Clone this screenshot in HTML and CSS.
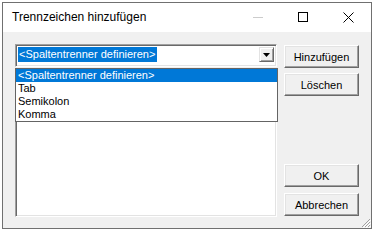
FILE: index.html
```html
<!DOCTYPE html>
<html>
<head>
<meta charset="utf-8">
<link rel="stylesheet" href="styles.css">
</head>
<body>
<div class="window">
  <div class="titlebar">
    <span class="title">Trennzeichen hinzufügen</span>
    <span class="tb-btn tb-min"><span class="min-line"></span></span>
    <span class="tb-btn tb-max"><span class="max-box"></span></span>
    <span class="tb-btn tb-close">
      <svg width="11" height="11" viewBox="0 0 11 11"><path d="M0.5 0.5 L10.5 10.5 M10.5 0.5 L0.5 10.5" stroke="#000" stroke-width="1"/></svg>
    </span>
  </div>
  <div class="content">
    <div class="left">
      <div class="combo">
        <span class="combo-text">&lt;Spaltentrenner definieren&gt;</span>
        <span class="combo-btn">
          <svg width="7" height="4" viewBox="0 0 7 4"><path d="M0 0 H7 L3.5 4 Z" fill="#000"/></svg>
        </span>
      </div>
      <div class="listbox">
        <ul class="popup">
          <li class="sel">&lt;Spaltentrenner definieren&gt;</li>
          <li>Tab</li>
          <li>Semikolon</li>
          <li>Komma</li>
        </ul>
      </div>
    </div>
    <div class="right">
      <button class="btn first">Hinzufügen</button>
      <button class="btn second">Löschen</button>
      <button class="btn ok">OK</button>
      <button class="btn cancel">Abbrechen</button>
    </div>
  </div>
  <svg class="grip" width="11" height="11" viewBox="0 0 11 11">
    <path d="M10 2 L2 10 M10 5 L5 10 M10 8 L8 10" stroke="#a0a0a0" stroke-width="1"/>
    <path d="M11 3 L3 11 M11 6 L6 11 M11 9 L9 11" stroke="#ffffff" stroke-width="1"/>
  </svg>
</div>
</body>
</html>
```
FILE: styles.css
```css
html, body {
  margin: 0;
  padding: 0;
  background: #ffffff;
}
body {
  font-family: "Liberation Sans", Arial, sans-serif;
}
.window {
  position: relative;
  margin: 2px 0 0 2px;
  width: 368px;
  height: 225px;
  border: 1px solid #707070;
  background: #f0f0f0;
  display: flex;
  flex-direction: column;
}
.titlebar {
  height: 29px;
  background: #ffffff;
  display: flex;
  align-items: center;
  flex: none;
}
.title {
  font-size: 12px;
  color: #000;
  margin-left: 9px;
  margin-top: -1px;
  flex: 1;
}
.tb-btn {
  width: 45px;
  height: 29px;
  display: flex;
  align-items: center;
  justify-content: center;
}
.min-line {
  width: 10px;
  height: 1px;
  background: #cccccc;
  margin-top: -1px;
}
.max-box {
  width: 8px;
  height: 8px;
  border: 1px solid #000;
  margin-top: -1px;
}
.tb-close {
  width: 46px;
  margin-right: 0;
}
.tb-close svg {
  margin-top: -1px;
}
.content {
  flex: 1;
  display: flex;
  padding: 12px 11px 11px 12px;
  gap: 7px;
  font-size: 11px;
  color: #000;
}
.left {
  width: 262px;
  display: flex;
  flex-direction: column;
}
.combo {
  height: 17px;
  background: #fff;
  border-style: solid;
  border-width: 1px;
  border-color: #a0a0a0 #ffffff #ffffff #a0a0a0;
  box-shadow: inset 1px 1px 0 #696969, inset -1px -1px 0 #e3e3e3;
  padding: 2px;
  display: flex;
  align-items: stretch;
}
.combo-text {
  background: #0078d7;
  color: #fff;
  line-height: 15px;
  padding: 0 2px 0 1px;
  margin-top: 1px;
  height: 15px;
  align-self: flex-start;
  margin-top: 0;
}
.combo-btn {
  margin-left: auto;
  width: 15px;
  height: 15px;
  box-sizing: border-box;
  background: #f0f0f0;
  border-style: solid;
  border-width: 1px;
  border-color: #e3e3e3 #696969 #696969 #e3e3e3;
  box-shadow: inset 1px 1px 0 #ffffff, inset -1px -1px 0 #a0a0a0;
  display: flex;
  align-items: center;
  justify-content: center;
}
.listbox {
  position: relative;
  margin-top: 1px;
  flex: 1;
  background: #fff;
  border-style: solid;
  border-width: 1px;
  border-color: #a0a0a0 #ffffff #ffffff #a0a0a0;
  box-shadow: inset 1px 1px 0 #696969, inset -1px -1px 0 #e3e3e3;
}
.popup {
  position: absolute;
  left: -1px;
  top: -1px;
  width: 261px;
  margin: 0;
  padding: 0;
  list-style: none;
  background: #fff;
  border: 1px solid #646464;
}
.popup li {
  height: 13px;
  line-height: 13px;
  padding-left: 2px;
}
.popup li.sel {
  background: #0078d7;
  color: #fff;
}
.right {
  width: 75px;
  display: flex;
  flex-direction: column;
}
.btn {
  font-family: "Liberation Sans", Arial, sans-serif;
  font-size: 11px;
  color: #000;
  height: 23px;
  width: 75px;
  padding: 0;
  background: #f0f0f0;
  border-style: solid;
  border-width: 1px;
  border-color: #ffffff #696969 #696969 #ffffff;
  box-shadow: inset -1px -1px 0 #a0a0a0, inset 1px 1px 0 #e3e3e3;
}
.first { margin-top: 1px; }
.second { margin-top: 5px; }
.ok { margin-top: auto; }
.cancel { margin-top: 6px; margin-bottom: 1px; }
.grip {
  position: absolute;
  right: 0;
  bottom: 0;
}
```
